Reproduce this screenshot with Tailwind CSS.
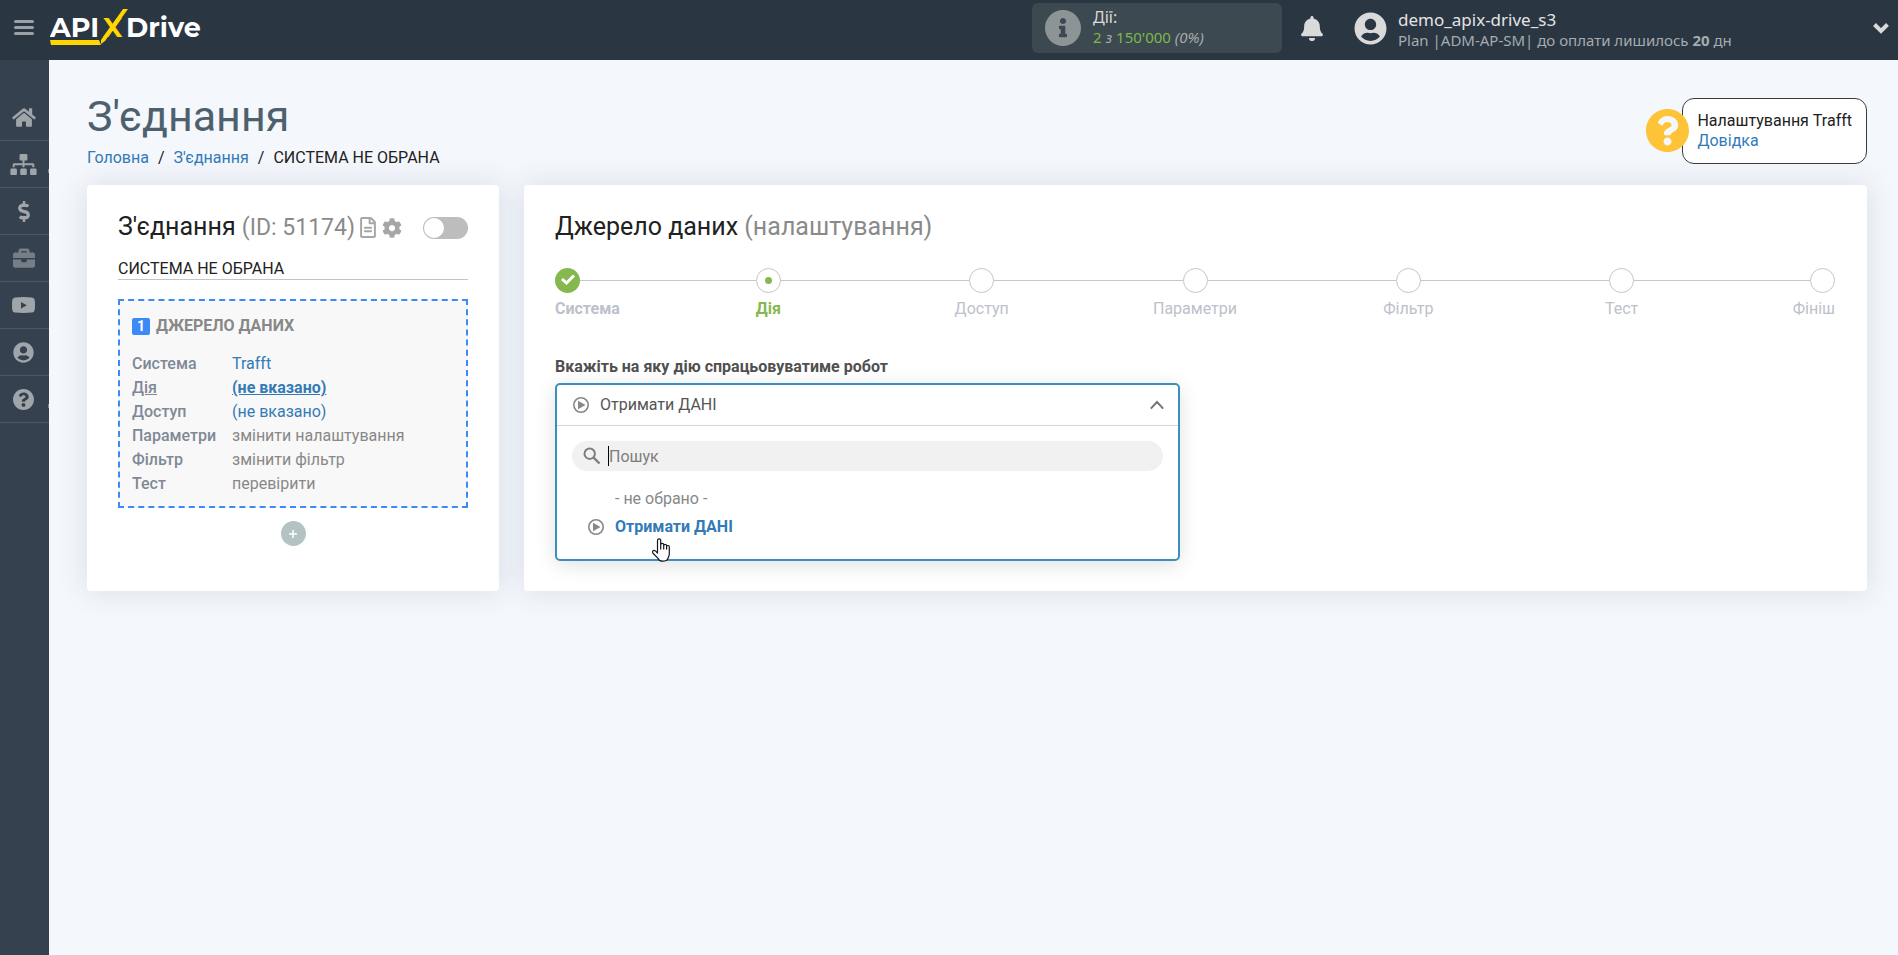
<!DOCTYPE html>
<html lang="uk">
  <head>
    <meta charset="UTF-8" />
    <meta name="viewport" content="width=device-width, initial-scale=1.0" />
    <title>З'єднання - ApiX-Drive</title>
    <script src="https://cdn.jsdelivr.net/npm/@tailwindcss/browser@4"></script>
  </head>

  <body class="min-h-screen flex flex-col bg-[#f4f7fc] font-['Roboto',sans-serif] text-base text-[#212121]">
    <!-- Shared icons -->
    <svg class="hidden" aria-hidden="true">
      <symbol id="i-user" viewBox="0 0 496 512"><path d="M248 8C111 8 0 119 0 256s111 248 248 248 248-111 248-248S385 8 248 8zm0 96c48.600 0 88 39.400 88 88s-39.400 88-88 88-88-39.400-88-88 39.400-88 88-88zm0 344c-58.700 0-111.300-26.600-146.500-68.200 18.800-35.400 55.600-59.800 98.500-59.800 2.400 0 4.800.4 7.100 1.100 13 4.200 26.600 6.900 40.900 6.900 14.300 0 28-2.700 40.900-6.900 2.300-.7 4.700-1.100 7.100-1.100 42.900 0 79.700 24.400 98.500 59.800C359.300 421.400 306.700 448 248 448z" /></symbol>
      <symbol id="i-question" viewBox="8 8 496 496"><path d="M504 256c0 136.997-111.043 248-248 248S8 392.997 8 256C8 119.083 119.043 8 256 8s248 111.083 248 248zM262.655 90c-54.497 0-89.255 22.957-116.549 63.758-3.536 5.286-2.353 12.415 2.715 16.258l34.699 26.310c5.205 3.947 12.621 3.008 16.665-2.122 17.864-22.658 30.113-35.797 57.303-35.797 20.429 0 45.698 13.148 45.698 32.958 0 14.976-12.363 22.667-32.534 33.976C247.128 238.528 216 254.941 216 296v4c0 6.627 5.373 12 12 12h56c6.627 0 12-5.373 12-12v-1.333c0-28.462 83.186-29.647 83.186-106.667 0-58.002-60.165-102-116.531-102zM256 338c-25.365 0-46 20.635-46 46 0 25.364 20.635 46 46 46s46-20.636 46-46c0-25.365-20.635-46-46-46z" /></symbol>
      <symbol id="i-play" viewBox="0 0 16 16"><circle cx="8" cy="8" r="7.200" fill="none" stroke="currentColor" stroke-width="1.600" /><path d="M5 3.800v8.400l7.500-4.200z" /></symbol>
    </svg>

    <!-- Top bar -->
    <header class="flex h-15 shrink-0 items-center bg-[#2b3643] font-['Noto_Sans',sans-serif]">
      <button type="button" aria-label="Меню" class="mb-1.5 ml-3.5 flex w-5 flex-col gap-[3px]">
        <span class="h-[3px] rounded-xs bg-[#9ba1a6]"></span>
        <span class="h-[3px] rounded-xs bg-[#9ba1a6]"></span>
        <span class="h-[3px] rounded-xs bg-[#9ba1a6]"></span>
      </button>
      <a href="#" aria-label="ApiX-Drive" class="ml-4">
        <svg class="h-15 w-[154px]" viewBox="0 0 154 60" font-family="Montserrat, Inter, sans-serif" font-weight="700" font-size="27">
          <text x="0" y="37" fill="#fff">API</text>
          <text x="53" y="37" fill="#ffd600">X</text>
          <text x="76" y="37" fill="#fff">Drive</text>
          <path d="M73 9h5L55 41l-4 3v-4z M0 40h49l2 5H1z" fill="#ffd600" />
        </svg>
      </a>

      <div class="mb-1 ml-auto flex h-[50px] w-[250px] items-center rounded-md bg-[#3c4950] pl-[13px]">
        <svg class="size-9 shrink-0 fill-[#8d9496]" viewBox="8 8 496 496"><path d="M256 8C119.043 8 8 119.083 8 256c0 136.997 111.043 248 248 248s248-111.003 248-248C504 119.083 392.957 8 256 8zm0 110c23.196 0 42 18.804 42 42s-18.804 42-42 42-42-18.804-42-42 18.804-42 42-42zm56 254c0 6.627-5.373 12-12 12h-88c-6.627 0-12-5.373-12-12v-24c0-6.627 5.373-12 12-12h12v-64h-12c-6.627 0-12-5.373-12-12v-24c0-6.627 5.373-12 12-12h64c6.627 0 12 5.373 12 12v100h12c6.627 0 12 5.373 12 12v24z" /></svg>
        <div class="ml-3 pb-0.5 leading-5">
          <p class="text-[#dadada]">Дії:</p>
          <p class="text-[15px] italic text-[#a5abae]"><span class="not-italic text-[#7fb84a]">2</span> з <span class="not-italic text-[#7fb84a]">150'000</span> (0%)</p>
        </div>
      </div>
      <button type="button" aria-label="Сповіщення" class="mb-1 ml-[19px]">
        <svg class="h-[25px] w-[22px] fill-[#dadada]" viewBox="0 0 448 512"><path d="M224 512c35.320 0 63.970-28.650 63.970-64H160.030c0 35.350 28.650 64 63.970 64zm215.390-149.710c-19.320-20.760-55.470-51.990-55.470-154.290 0-77.700-54.480-139.900-127.940-155.160V32c0-17.670-14.320-32-31.980-32s-31.980 14.330-31.980 32v20.840C118.560 68.100 64.080 130.300 64.080 208c0 102.300-36.150 133.530-55.470 154.290-6 6.450-8.660 14.160-8.610 21.710.11 16.400 12.980 32 32.100 32h383.800c19.120 0 32-15.600 32.100-32 .05-7.550-2.610-15.270-8.610-21.710z" /></svg>
      </button>
      <button type="button" class="mr-[9px] mb-1 ml-[31px] flex w-[535px] items-center text-left">
        <svg class="size-[33px] shrink-0 fill-[#dadada]"><use href="#i-user" /></svg>
        <span class="ml-[11px] block pt-1 leading-5">
          <span class="block text-[17px] text-[#e4e4e4]">demo_apix-drive_s3</span>
          <span class="block text-[15px] text-[#a5abae]">Plan |ADM-AP-SM| до оплати лишилось <b>20</b> дн</span>
        </span>
        <svg class="ml-auto h-3 w-4 shrink-0" viewBox="0 0 16 12" fill="none" stroke="#dadada" stroke-width="4"><path d="M1.500 2.500l6.500 6.500 6.500-6.500" /></svg>
      </button>
    </header>

    <div class="flex flex-1">
      <!-- Side menu -->
      <nav class="w-[49px] shrink-0 bg-[#36414f] pt-[34px]">
        <ul class="fill-[#a0a5aa] text-[#a0a5aa]">
          <li class="border-b border-[#4d5865]">
            <a href="#" aria-label="Головна" class="flex h-[46px] items-center justify-center pr-0.5">
              <svg class="h-[21px] w-6" viewBox="0 0 576 512"><path d="M280.370 148.260L96 300.110V464a16 16 0 0 0 16 16l112.060-.29a16 16 0 0 0 15.920-16V368a16 16 0 0 1 16-16h64a16 16 0 0 1 16 16v95.640a16 16 0 0 0 16 16.050L464 480a16 16 0 0 0 16-16V300L295.670 148.260a12.190 12.190 0 0 0-15.300 0zM571.600 251.470L488 182.560V44.050a12 12 0 0 0-12-12h-56a12 12 0 0 0-12 12v72.610L318.470 43a48 48 0 0 0-61 0L4.340 251.470a12 12 0 0 0-1.600 16.900l25.500 31A12 12 0 0 0 45.150 301l235.220-193.740a12.190 12.190 0 0 1 15.300 0L530.900 301a12 12 0 0 0 16.900-1.600l25.500-31a12 12 0 0 0-1.700-16.930z" /></svg>
            </a>
          </li>
          <li class="border-b border-[#4d5865]">
            <a href="#" aria-label="З'єднання" class="relative flex h-[46px] items-center justify-center pr-0.5">
              <svg class="h-[21px] w-[27px]" viewBox="0 0 640 512"><path d="M128 352H32c-17.670 0-32 14.330-32 32v96c0 17.670 14.330 32 32 32h96c17.670 0 32-14.330 32-32v-96c0-17.670-14.330-32-32-32zm-24-80h192v48h48v-48h192v48h48v-57.590c0-21.170-17.230-38.410-38.410-38.410H344v-64h40c17.670 0 32-14.330 32-32V32c0-17.670-14.330-32-32-32H256c-17.670 0-32 14.330-32 32v96c0 17.670 14.330 32 32 32h40v64H94.410C73.230 224 56 241.230 56 262.410V320h48v-48zm264 80h-96c-17.670 0-32 14.330-32 32v96c0 17.670 14.330 32 32 32h96c17.670 0 32-14.330 32-32v-96c0-17.670-14.330-32-32-32zm240 0h-96c-17.670 0-32 14.330-32 32v96c0 17.670 14.330 32 32 32h96c17.670 0 32-14.330 32-32v-96c0-17.670-14.330-32-32-32z" /></svg>
              <span class="absolute right-0 bottom-3.5 h-1 w-px bg-[#7d868f]"></span>
            </a>
          </li>
          <li class="border-b border-[#4d5865]">
            <a href="#" aria-label="Оплата" class="flex h-[46px] items-center justify-center pr-0.5">
              <svg class="h-[21px] w-3" viewBox="0 0 288 512"><path d="M209.200 233.400l-108-31.600C88.700 198.200 80 186.500 80 173.500c0-16.300 13.200-29.500 29.500-29.500h66.300c12.200 0 24.200 3.700 34.200 10.500 6.100 4.100 14.300 3.100 19.500-2l34.800-34c7.100-6.900 6.100-18.400-1.800-24.500C238 74.800 207.400 64.100 176 64V16c0-8.800-7.200-16-16-16h-32c-8.800 0-16 7.200-16 16v48h-2.500C45.800 64-5.400 118.700.5 183.600c4.200 46.100 39.400 83.600 83.800 96.600l102.500 30c12.500 3.700 21.200 15.300 21.200 28.300 0 16.300-13.200 29.500-29.500 29.500h-66.300C100 368 88 364.300 78 357.500c-6.100-4.100-14.300-3.100-19.500 2l-34.800 34c-7.100 6.900-6.100 18.400 1.800 24.500 24.500 19.200 55.100 29.900 86.500 30v48c0 8.800 7.200 16 16 16h32c8.800 0 16-7.200 16-16v-48.200c46.600-.9 90.300-28.600 105.700-72.700 21.500-61.600-14.600-124.800-72.500-141.700z" /></svg>
            </a>
          </li>
          <li class="border-b border-[#4d5865]">
            <a href="#" aria-label="Послуги" class="flex h-[46px] items-center justify-center pr-0.5">
              <svg class="size-[22px] fill-[#757d87]" viewBox="0 0 512 512"><path d="M320 336c0 8.840-7.160 16-16 16h-96c-8.840 0-16-7.160-16-16v-48H0v144c0 25.600 22.400 48 48 48h416c25.600 0 48-22.400 48-48V288H320v48zm144-208h-80V80c0-25.600-22.400-48-48-48H176c-25.600 0-48 22.400-48 48v48H48c-25.600 0-48 22.400-48 48v80h512v-80c0-25.600-22.400-48-48-48zm-144 0H192V96h128v32z" /></svg>
            </a>
          </li>
          <li class="border-b border-[#4d5865]">
            <a href="#" aria-label="Відео" class="flex h-[46px] items-center justify-center pr-0.5">
              <svg class="h-4 w-[23px]" viewBox="0 0 23 16"><path fill-rule="evenodd" d="M3 .4Q11.500-.4 20 .4Q22.600.7 22.800 3.500Q23.200 8 22.800 12.500Q22.600 15.300 20 15.600Q11.500 16.400 3 15.600Q.4 15.300.2 12.500Q-.2 8 .2 3.500Q.4.700 3 .4zM9 5v6.400l5.800-3.200z" /></svg>
            </a>
          </li>
          <li class="border-b border-[#4d5865]">
            <a href="#" aria-label="Профіль" class="flex h-[46px] items-center justify-center pr-0.5">
              <svg class="size-[21px]"><use href="#i-user" /></svg>
            </a>
          </li>
          <li class="border-b border-[#4d5865]">
            <a href="#" aria-label="Допомога" class="relative flex h-[46px] items-center justify-center pr-0.5">
              <svg class="size-[21px]"><use href="#i-question" /></svg>
              <span class="absolute right-0 bottom-3.5 h-1 w-px bg-[#7d868f]"></span>
            </a>
          </li>
        </ul>
      </nav>

      <main class="min-w-0 flex-1 pt-[31px] pr-[31px] pl-[38px]">
        <!-- Page heading -->
        <div class="mb-[15px] flex items-center justify-between">
          <div>
            <h1 class="text-[43px] leading-[50px] text-[#4e606c]">З'єднання</h1>
            <nav aria-label="Шлях" class="mt-[5px] flex gap-[9px] leading-6">
              <a href="#" class="text-[#337ab7]">Головна</a>
              <span>/</span>
              <a href="#" class="text-[#337ab7]">З'єднання</a>
              <span>/</span>
              <span>СИСТЕМА НЕ ОБРАНА</span>
            </nav>
          </div>
          <div class="flex items-center">
            <svg class="relative -mr-[7px] size-[43px] fill-[#ffc338]"><use href="#i-question" /></svg>
            <div class="rounded-xl border border-[#3c3c3c] bg-white px-3.5 py-3 leading-5">
              <p>Налаштування Trafft</p>
              <a href="#" class="text-[#337ab7]">Довідка</a>
            </div>
          </div>
        </div>

        <div class="flex gap-[25px]">
          <!-- Connection card -->
          <section class="w-[412px] shrink-0 rounded-sm bg-white px-[31px] pt-[26px] pb-[45px] shadow-[0_0_30px_rgba(60,70,90,0.14)]">
            <div class="flex items-center">
              <h2 class="text-[25px] leading-8 whitespace-nowrap">З'єднання <span class="text-[23px] text-[#8a8a8a]">(ID: 51174)</span></h2>
              <button type="button" aria-label="Журнал" class="ml-[5px]">
                <svg class="h-[21px] w-4 fill-[#a6a6a6]" viewBox="0 0 384 512"><path d="M288 248v28c0 6.600-5.400 12-12 12H108c-6.600 0-12-5.400-12-12v-28c0-6.600 5.400-12 12-12h168c6.600 0 12 5.400 12 12zm-12 72H108c-6.600 0-12 5.400-12 12v28c0 6.600 5.400 12 12 12h168c6.600 0 12-5.400 12-12v-28c0-6.600-5.400-12-12-12zm108-188.100V464c0 26.500-21.500 48-48 48H48c-26.500 0-48-21.500-48-48V48C0 21.500 21.500 0 48 0h204.100C264.800 0 277 5.100 286 14.100L369.900 98c9 8.900 14.100 21.200 14.100 33.900zm-128-80V128h76.100L256 51.900zM336 464V176H232c-13.300 0-24-10.700-24-24V48H48v416h288z" /></svg>
              </button>
              <button type="button" aria-label="Налаштування" class="ml-1.5">
                <svg class="size-5 fill-[#a6a6a6]" viewBox="0 0 512 512"><path d="M487.400 315.700l-42.600-24.600c4.300-23.200 4.300-47 0-70.200l42.600-24.600c4.900-2.800 7.100-8.600 5.500-14-11.100-35.600-30-67.800-54.700-94.600-3.800-4.100-10-5.100-14.800-2.300L380.800 110c-17.900-15.400-38.500-27.300-60.800-35.100V25.800c0-5.600-3.900-10.500-9.400-11.700-36.700-8.200-74.300-7.800-109.200 0-5.500 1.200-9.400 6.100-9.400 11.700V75c-22.200 7.900-42.800 19.800-60.800 35.100L88.700 85.500c-4.900-2.800-11-1.900-14.800 2.300-24.700 26.700-43.600 58.900-54.700 94.600-1.700 5.400.6 11.200 5.500 14L67.300 221c-4.300 23.200-4.300 47 0 70.200l-42.600 24.600c-4.900 2.800-7.100 8.600-5.500 14 11.100 35.600 30 67.800 54.700 94.600 3.800 4.100 10 5.100 14.800 2.300l42.600-24.600c17.900 15.400 38.500 27.300 60.800 35.100v49.200c0 5.600 3.900 10.500 9.400 11.700 36.700 8.200 74.300 7.800 109.200 0 5.500-1.200 9.400-6.100 9.400-11.700v-49.200c22.200-7.900 42.800-19.800 60.800-35.100l42.600 24.600c4.900 2.800 11 1.900 14.800-2.300 24.700-26.700 43.600-58.900 54.700-94.600 1.500-5.500-.7-11.300-5.600-14.100zM256 336c-44.100 0-80-35.900-80-80s35.900-80 80-80 80 35.900 80 80-35.900 80-80 80z" /></svg>
              </button>
              <label class="ml-auto flex h-[22px] w-[45px] items-center rounded-full bg-[#bdbdbd] p-px">
                <input type="checkbox" aria-label="Увімкнути з'єднання" class="size-5 appearance-none rounded-full bg-white checked:ml-auto" />
              </label>
            </div>
            <p class="mt-[13px] h-[23px] border-b border-[#c4c4c4] leading-6">СИСТЕМА НЕ ОБРАНА</p>

            <div class="mt-[19px] border-2 border-dashed border-[#3b8af7] bg-[#f8f8f8] px-3 pt-[13px] pb-2.5 leading-6">
              <h3 class="flex items-center font-bold text-[#888]">
                <span class="mr-1.5 flex h-[17px] w-[18px] items-center justify-center rounded-xs bg-[#3b8af7] text-sm font-bold text-white">1</span>
                ДЖЕРЕЛО ДАНИХ
              </h3>
              <dl class="mt-3.5 grid grid-cols-[100px_1fr] text-[#888]">
                <dt class="font-medium text-[#808896]">Система</dt>
                <dd><a href="#" class="text-[#337ab7]">Trafft</a></dd>
                <dt class="font-medium text-[#808896] underline">Дія</dt>
                <dd><a href="#" class="font-bold text-[#337ab7] underline">(не вказано)</a></dd>
                <dt class="font-medium text-[#808896]">Доступ</dt>
                <dd><a href="#" class="text-[#337ab7]">(не вказано)</a></dd>
                <dt class="font-medium text-[#808896]">Параметри</dt>
                <dd><a href="#">змінити налаштування</a></dd>
                <dt class="font-medium text-[#808896]">Фільтр</dt>
                <dd><a href="#">змінити фільтр</a></dd>
                <dt class="font-medium text-[#808896]">Тест</dt>
                <dd><a href="#">перевірити</a></dd>
              </dl>
            </div>
            <button type="button" aria-label="Додати" class="mx-auto mt-[13px] flex size-[25px] items-center justify-center rounded-full bg-[#b3c3c3]">
              <svg class="size-2" viewBox="0 0 8 8" stroke="#fff" stroke-width="1.500"><path d="M4 0v8M0 4h8" /></svg>
            </button>
          </section>

          <!-- Data source card -->
          <section class="min-w-0 flex-1 rounded-sm bg-white px-[31px] pt-[26px] pb-[29px] shadow-[0_0_30px_rgba(60,70,90,0.14)]">
            <h2 class="text-[25px] leading-8">Джерело даних <span class="text-[#8a8a8a]">(налаштування)</span></h2>

            <!-- Steps -->
            <ol class="mt-[25px] grid grid-cols-12 pr-px text-center leading-6 text-[#bcc1cb]">
              <li class="text-left">
                <div class="flex items-center">
                  <span class="flex size-[25px] items-center justify-center rounded-full bg-[#85b84f]">
                    <svg class="mb-0.5 h-3 w-3.5" viewBox="0 0 14 12" fill="none" stroke="#fff" stroke-width="3"><path d="M1 5l4.500 4L13 1.500" /></svg>
                  </span>
                  <span class="h-px flex-1 bg-[#c6c6c6]"></span>
                </div>
                <a href="#" class="mt-1 block font-bold">Система</a>
              </li>
              <li class="col-span-2">
                <div class="flex items-center">
                  <span class="h-px flex-1 bg-[#c6c6c6]"></span>
                  <span class="flex size-[25px] items-center justify-center rounded-full border border-[#c6c6c6]"><span class="size-[7px] rounded-full bg-[#85b84f]"></span></span>
                  <span class="h-px flex-1 bg-[#c6c6c6]"></span>
                </div>
                <a href="#" class="mt-1 block font-bold text-[#85b84f]">Дія</a>
              </li>
              <li class="col-span-2">
                <div class="flex items-center">
                  <span class="h-px flex-1 bg-[#c6c6c6]"></span>
                  <span class="size-[25px] rounded-full border border-[#c6c6c6]"></span>
                  <span class="h-px flex-1 bg-[#c6c6c6]"></span>
                </div>
                <p class="mt-1">Доступ</p>
              </li>
              <li class="col-span-2">
                <div class="flex items-center">
                  <span class="h-px flex-1 bg-[#c6c6c6]"></span>
                  <span class="size-[25px] rounded-full border border-[#c6c6c6]"></span>
                  <span class="h-px flex-1 bg-[#c6c6c6]"></span>
                </div>
                <p class="mt-1">Параметри</p>
              </li>
              <li class="col-span-2">
                <div class="flex items-center">
                  <span class="h-px flex-1 bg-[#c6c6c6]"></span>
                  <span class="size-[25px] rounded-full border border-[#c6c6c6]"></span>
                  <span class="h-px flex-1 bg-[#c6c6c6]"></span>
                </div>
                <p class="mt-1">Фільтр</p>
              </li>
              <li class="col-span-2">
                <div class="flex items-center">
                  <span class="h-px flex-1 bg-[#c6c6c6]"></span>
                  <span class="size-[25px] rounded-full border border-[#c6c6c6]"></span>
                  <span class="h-px flex-1 bg-[#c6c6c6]"></span>
                </div>
                <p class="mt-1">Тест</p>
              </li>
              <li class="text-right">
                <div class="flex items-center">
                  <span class="h-px flex-1 bg-[#c6c6c6]"></span>
                  <span class="size-[25px] rounded-full border border-[#c6c6c6]"></span>
                </div>
                <p class="mt-1">Фініш</p>
              </li>
            </ol>

            <!-- Action picker, open -->
            <p id="action-label" class="mt-[34px] leading-6 font-bold text-[#505050]">Вкажіть на яку дію спрацьовуватиме робот</p>
            <div class="mt-1 w-[625px] max-w-full rounded-[5px] border-2 border-[#3990bc] shadow-[0_4px_20px_rgba(0,0,0,0.12)]">
              <button type="button" aria-labelledby="action-label" aria-expanded="true" class="flex h-[41px] w-full items-center border-b border-[#d5d5d5] pr-3.5 pl-4 text-[#555]">
                <svg class="size-4 fill-[#888] text-[#888]"><use href="#i-play" /></svg>
                <span class="ml-[11px]">Отримати ДАНІ</span>
                <svg class="ml-auto h-2.5 w-3.5" viewBox="0 0 14 10" fill="none" stroke="#757575" stroke-width="2"><path d="M.8 8.600L7 2l6.200 6.600" /></svg>
              </button>
              <div class="px-[15px] pt-[15px] pb-[18px]">
                <label class="flex h-[30px] items-center rounded-full bg-[#f1f1f1] pl-[11px]">
                  <svg class="size-[18px]" viewBox="0 0 18 18" fill="none" stroke="#7d7d7d"><circle cx="6.700" cy="6.700" r="5.200" stroke-width="2" /><path d="M10.500 10.500l6 6" stroke-width="2.400" /></svg>
                  <span class="ml-[7px] h-5 w-px bg-black"></span>
                  <input type="text" placeholder="Пошук" aria-label="Пошук" class="min-w-0 flex-1 pt-0.5 outline-none placeholder:text-[#7d7d7d]" />
                </label>
                <ul class="mt-3.5 pl-4 leading-7">
                  <li><button type="button" class="pl-[27px] text-[#888]">- не обрано -</button></li>
                  <li class="relative">
                    <button type="button" class="flex items-center gap-[11px] font-bold text-[#337ab7]">
                      <svg class="size-4 fill-[#888] text-[#888]"><use href="#i-play" /></svg>
                      Отримати ДАНІ
                    </button>
                    <!-- pointer -->
                    <svg class="absolute top-[25px] left-16 h-6 w-[18px]" viewBox="0 0 18 24" fill="#fff" stroke="#15151f" stroke-width="1.200" stroke-linejoin="round"><path d="M5.500 14.500V2.400a1.600 1.600 0 0 1 3.200 0V7a1.500 1.500 0 0 1 3-.2v.6a1.500 1.500 0 0 1 2.900 0v1a1.400 1.400 0 0 1 2.700.4V16c0 2-1.200 3.200-1.500 4.800-.7 1.800-2.300 2.400-5 2.400-3 0-4-.8-4.900-3L1.200 15.500c-.7-1.200-.9-2.300-.1-2.800 1-.6 2.600 0 4.400 2.400zM8.700 7v4.500M11.700 7v4.500M14.600 8v3.500" /></svg>
                  </li>
                </ul>
              </div>
            </div>
          </section>
        </div>
      </main>
    </div>
  </body>
</html>
